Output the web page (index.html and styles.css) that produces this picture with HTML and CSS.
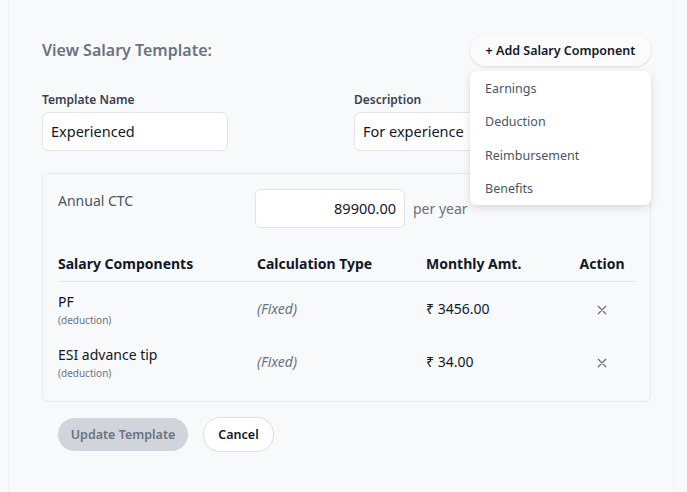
FILE: index.html
```html
<!DOCTYPE html>
<html>
<head>
<meta charset="utf-8">
<link rel="stylesheet" href="styles.css">
</head>
<body>
<div class="page">
  <div class="header">
    <h1 class="title">View Salary Template:</h1>
    <div class="add-wrap">
      <button class="add-btn">+ Add Salary Component</button>
      <div class="menu">
        <div class="menu-item">Earnings</div>
        <div class="menu-item">Deduction</div>
        <div class="menu-item">Reimbursement</div>
        <div class="menu-item">Benefits</div>
      </div>
    </div>
  </div>

  <div class="fields">
    <div class="field">
      <label class="label">Template Name</label>
      <div class="input">Experienced</div>
    </div>
    <div class="field">
      <label class="label">Description</label>
      <div class="input">For experience</div>
    </div>
  </div>

  <div class="card">
    <div class="ctc-row">
      <div class="ctc-label">Annual CTC</div>
      <div class="input ctc-input">89900.00</div>
      <div class="per-year">per year</div>
    </div>

    <div class="table">
      <div class="tr thead">
        <div class="th">Salary Components</div>
        <div class="th">Calculation Type</div>
        <div class="th">Monthly Amt.</div>
        <div class="th center">Action</div>
      </div>
      <div class="tr row">
        <div class="td name"><div>PF</div><div class="sub">(deduction)</div></div>
        <div class="td calc">(Fixed)</div>
        <div class="td amt">₹ 3456.00</div>
        <div class="td center"><svg class="x" width="12" height="12" viewBox="0 0 12 12"><path d="M1.5 1.5 L10.5 10.5 M10.5 1.5 L1.5 10.5" stroke="#6b7280" stroke-width="1.5" stroke-linecap="round"/></svg></div>
      </div>
      <div class="tr row">
        <div class="td name"><div>ESI advance tip</div><div class="sub">(deduction)</div></div>
        <div class="td calc">(Fixed)</div>
        <div class="td amt">₹ 34.00</div>
        <div class="td center"><svg class="x" width="12" height="12" viewBox="0 0 12 12"><path d="M1.5 1.5 L10.5 10.5 M10.5 1.5 L1.5 10.5" stroke="#6b7280" stroke-width="1.5" stroke-linecap="round"/></svg></div>
      </div>
    </div>
  </div>

  <div class="actions">
    <button class="btn btn-update">Update Template</button>
    <button class="btn btn-cancel">Cancel</button>
  </div>
</div>
</body>
</html>
```
FILE: styles.css
```css
html, body {
  margin: 0;
  background: #f8f9fb;
}
body {
  padding: 0 13px 0 8px;
  font-family: "Noto Sans", "Open Sans", sans-serif;
  color: #111827;
}
.page {
  min-height: 492px;
  box-sizing: border-box;
  border-left: 1px solid #f0f1f4;
  border-right: 1px solid #f0f1f4;
  padding: 34px 22px 0 33px;
  background: #f8f9fb;
}
.header {
  display: flex;
  justify-content: space-between;
  align-items: center;
  height: 32px;
}
.title {
  margin: 0;
  font-size: 16px;
  font-weight: 600;
  color: #6b7280;
}
.add-wrap {
  position: relative;
}
.add-btn {
  font-family: inherit;
  height: 32px;
  width: 181px;
  border: none;
  border-radius: 16px;
  background: #fbfbfc;
  box-shadow: 0 1px 3px rgba(0,0,0,0.12);
  font-size: 12.5px;
  font-weight: 600;
  color: #111827;
  padding: 0;
}
.menu {
  position: absolute;
  top: 37px;
  right: 0;
  width: 181px;
  background: #fff;
  border-radius: 6px;
  box-shadow: 0 3px 8px rgba(0,0,0,0.12), 0 0 1px rgba(0,0,0,0.1);
  padding: 1px 0 0;
  z-index: 5;
}
.menu-item {
  height: 33.3px;
  line-height: 33.3px;
  padding-left: 15px;
  font-size: 12.5px;
  color: #4b5563;
}
.fields {
  display: grid;
  grid-template-columns: 297px 297px;
  column-gap: 15px;
  margin-top: 25px;
}
.label {
  display: block;
  font-size: 12px;
  font-weight: 600;
  color: #374151;
  height: 18px;
  line-height: 18px;
  margin-bottom: 3px;
}
.input {
  box-sizing: border-box;
  width: 186px;
  height: 39px;
  line-height: 37px;
  border: 1px solid #e2e4e8;
  border-radius: 6px;
  background: #fff;
  padding: 0 8px;
  font-size: 14.5px;
  color: #111827;
}
.card {
  margin-top: 22px;
  border: 1px solid #e8eaee;
  border-radius: 6px;
  padding: 15px 15px 13px;
}
.ctc-row {
  display: flex;
  align-items: flex-start;
}
.ctc-label {
  width: 197px;
  font-size: 14px;
  color: #4b5563;
  padding-top: 2px;
}
.ctc-input {
  width: 150px;
  text-align: right;
}
.per-year {
  margin-left: 8px;
  font-size: 14px;
  color: #6b7280;
  line-height: 39px;
}
.table {
  margin-top: 17px;
}
.tr {
  display: grid;
  grid-template-columns: 199px 169px 142px 68px;
  align-items: center;
}
.thead {
  height: 36px;
  border-bottom: 1px solid #e5e7eb;
}
.th {
  font-size: 14px;
  font-weight: 700;
  color: #111827;
}
.center {
  text-align: center;
}
.row {
  height: 53px;
}
.td {
  font-size: 14px;
  color: #111827;
}
.name {
  line-height: 18px;
  padding-top: 2px;
}
.sub {
  font-size: 10px;
  color: #6b7280;
  line-height: 14px;
  margin-top: 2px;
}
.calc {
  font-style: italic;
  color: #6b7280;
}
.x {
  display: inline-block;
  vertical-align: middle;
  width: 10px;
  height: 10px;
}
.actions {
  display: flex;
  gap: 15px;
  margin-top: 15px;
  padding-left: 16px;
  align-items: center;
}
.btn {
  font-family: inherit;
  font-size: 12.5px;
  font-weight: 600;
  border-radius: 17px;
  padding: 0;
}
.btn-update {
  width: 130px;
  height: 33px;
  border: none;
  background: #d1d5db;
  color: #6b7280;
}
.btn-cancel {
  width: 71px;
  height: 35px;
  border: 1px solid #dcdfe4;
  background: #fff;
  color: #111827;
}
```
